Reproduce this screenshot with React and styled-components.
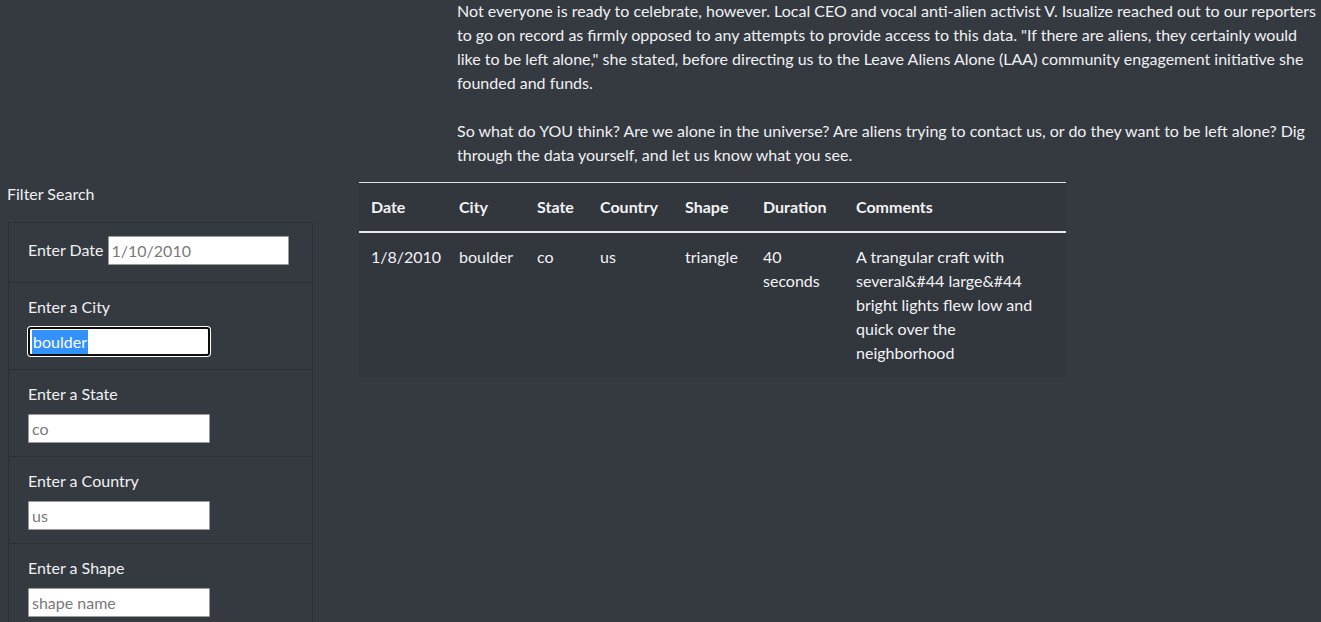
import React from "react";
import styled, { createGlobalStyle } from "styled-components";

const GlobalStyle = createGlobalStyle`
  html, body {
    margin: 0;
    background: #353940;
    color: #eff1f3;
    font-family: Lato, "Open Sans", sans-serif;
    font-size: 16px;
    line-height: 24px;
    overflow: hidden;
  }
`;

const Page = styled.div`
  width: 1321px;
`;

const Intro = styled.div`
  padding-left: 457px;
  margin-top: -1px;
  margin-bottom: 15px;

  p {
    margin: 0 0 24px;
    white-space: nowrap;
  }
  p:last-child {
    margin-bottom: 0;
  }
`;

const Row = styled.div`
  display: flex;
  align-items: flex-start;
`;

const FilterColumn = styled.aside`
  width: 359px;
  flex: none;
  padding-left: 8px;
  box-sizing: border-box;
`;

const FilterTitle = styled.h5`
  margin: 0 0 16px -1px;
  font-size: 16px;
  font-weight: 400;
  line-height: 24px;
`;

const FilterList = styled.ul`
  list-style: none;
  margin: 0;
  padding: 0 0 40px;
  width: 305px;
  box-sizing: border-box;
  border: 1px solid #2c3036;
  border-bottom: none;
`;

const FilterItem = styled.li`
  padding: 12px 20px 13px 19px;
  border-top: 1px solid #2c3036;
  display: ${(p) => (p.$inline ? "flex" : "block")};
  align-items: flex-start;
  gap: 4px;

  &:first-child {
    border-top: none;
    padding-bottom: 11px;
  }
`;

const Label = styled.label`
  display: block;
  line-height: ${(p) => (p.$inline ? "29px" : "24px")};
  margin: ${(p) => (p.$inline ? "0 0 7px" : "0 0 8px")};
  white-space: nowrap;
`;

const TextInput = styled.input`
  display: block;
  width: ${(p) => p.$width || 182}px;
  height: 29px;
  margin-top: ${(p) => (p.$inline ? "1px" : "0")};
  box-sizing: border-box;
  border: 1px solid #9b9b9b;
  border-radius: 1px;
  background: #fff;
  padding: 0 3px;
  font-family: inherit;
  font-size: 16px;
  color: #222;
  outline: none;

  &::placeholder {
    color: #7a7a7a;
  }
`;

const FocusedInput = styled.div`
  width: 182px;
  height: 29px;
  box-sizing: border-box;
  border: 2px solid #0d0d0d;
  border-radius: 3px;
  box-shadow: 0 0 0 1px #ffffff;
  background: #fff;
  padding: 1px 2px;
  display: flex;
  align-items: center;
  font-size: 16px;
  line-height: 22px;
`;

const Selection = styled.span`
  background: #3390ff;
  color: #fff;
  padding: 0 1px 1px;
  line-height: 23px;
`;

const TableWrap = styled.div`
  width: 707px;
`;

const DataTable = styled.table`
  width: 707px;
  table-layout: fixed;
  border-collapse: collapse;
  background: #32363d;
  color: #f2f3f5;

  th, td {
    padding: 12px;
    text-align: left;
    vertical-align: top;
    line-height: 24px;
  }

  th {
    font-weight: 700;
    border-top: 1px solid #dfe2e6;
    border-bottom: 2px solid #e8eaed;
  }
`;

const filters = [
  { key: "city", label: "Enter a City", focused: true, value: "boulder" },
  { key: "state", label: "Enter a State", placeholder: "co" },
  { key: "country", label: "Enter a Country", placeholder: "us" },
  { key: "shape", label: "Enter a Shape", placeholder: "shape name" },
];

const columns = [
  ["Date", 88],
  ["City", 78],
  ["State", 63],
  ["Country", 85],
  ["Shape", 78],
  ["Duration", 93],
  ["Comments", 222],
];

const rows = [
  {
    datetime: "1/8/2010",
    city: "boulder",
    state: "co",
    country: "us",
    shape: "triangle",
    duration: "40 seconds",
    comments:
      "A trangular craft with several&#44 large&#44 bright lights flew low and quick over the neighborhood",
  },
];

export default function App() {
  return (
    <Page>
      <GlobalStyle />
      <Intro>
        <p>
          Not everyone is ready to celebrate, however. Local CEO and vocal anti-alien activist V. Isualize reached out to our reporters
          <br />
          to go on record as firmly opposed to any attempts to provide access to this data. "If there are aliens, they certainly would
          <br />
          like to be left alone," she stated, before directing us to the Leave Aliens Alone (LAA) community engagement initiative she
          <br />
          founded and funds.
        </p>
        <p>
          So what do YOU think? Are we alone in the universe? Are aliens trying to contact us, or do they want to be left alone? Dig
          <br />
          through the data yourself, and let us know what you see.
        </p>
      </Intro>

      <Row>
        <FilterColumn>
          <FilterTitle>Filter Search</FilterTitle>
          <FilterList>
            <FilterItem $inline>
              <Label $inline htmlFor="datetime">Enter Date</Label>
              <TextInput $inline $width={181} id="datetime" placeholder="1/10/2010" />
            </FilterItem>
            {filters.map((f) => (
              <FilterItem key={f.key}>
                <Label htmlFor={f.key}>{f.label}</Label>
                {f.focused ? (
                  <FocusedInput id={f.key}>
                    <Selection>{f.value}</Selection>
                  </FocusedInput>
                ) : (
                  <TextInput id={f.key} placeholder={f.placeholder} />
                )}
              </FilterItem>
            ))}
          </FilterList>
        </FilterColumn>

        <TableWrap>
          <DataTable>
            <colgroup>
              {columns.map(([name, w]) => (
                <col key={name} style={{ width: w }} />
              ))}
            </colgroup>
            <thead>
              <tr>
                {columns.map(([name]) => (
                  <th key={name}>{name}</th>
                ))}
              </tr>
            </thead>
            <tbody>
              {rows.map((r, i) => (
                <tr key={i}>
                  <td>{r.datetime}</td>
                  <td>{r.city}</td>
                  <td>{r.state}</td>
                  <td>{r.country}</td>
                  <td>{r.shape}</td>
                  <td>{r.duration}</td>
                  <td>{r.comments}</td>
                </tr>
              ))}
            </tbody>
          </DataTable>
        </TableWrap>
      </Row>
    </Page>
  );
}
